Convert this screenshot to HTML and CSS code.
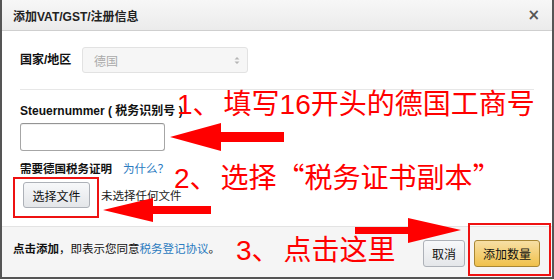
FILE: index.html
```html
<!DOCTYPE html>
<html lang="zh-CN">
<head>
<meta charset="utf-8">
<title>添加VAT/GST/注册信息</title>
<link rel="stylesheet" href="styles.css">
</head>
<body>
<div class="modal">
  <div class="modal-header">
    <span class="modal-title">添加VAT/GST/注册信息</span>
    <span class="close">×</span>
  </div>
  <div class="modal-body">
    <div class="row-country">
      <span class="label">国家/地区</span>
      <div class="select">
        <span>德国</span>
        <svg class="updown" width="6" height="9" viewBox="0 0 6 9"><path d="M0.5 3.5 L3 1 L5.5 3.5 Z M0.5 5.5 L3 8 L5.5 5.5 Z" fill="#b5b5b5"/></svg>
      </div>
    </div>
    <div class="divider"></div>
    <div class="label label-tax">Steuernummer ( 税务识别号 )</div>
    <div class="text-input"></div>
    <div class="label-line"><span class="label label-proof">需要德国税务证明</span><a class="why">为什么？</a></div>
    <div class="file-row">
      <span class="btn btn-file">选择文件</span>
      <span class="nofile">未选择任何文件</span>
    </div>
  </div>
  <div class="modal-footer">
    <span class="footer-text"><b>点击添加</b>，即表示您同意<a class="link">税务登记协议</a>。</span>
    <div class="actions">
      <span class="btn btn-cancel">取消</span>
      <span class="btn btn-primary">添加数量</span>
    </div>
  </div>
</div>

<svg class="overlay" width="554" height="280" viewBox="0 0 554 280">
  <rect x="14" y="178" width="84" height="39" fill="none" stroke="#ee1111" stroke-width="2"/>
  <rect x="469" y="224" width="81" height="51" fill="none" stroke="#ee1111" stroke-width="2"/>
  <polygon points="170,137 221,123 221,132 284,132 284,142 221,142 221,151" fill="#ff0000"/>
  <polygon points="103,210 153,198 153,206 211,206 211,214 153,214 153,222" fill="#ff0000"/>
  <polygon points="355,227 408,227 408,218 461,230 408,243 408,234 355,234" fill="#ff0000"/>
</svg>
<div class="note note1">1、<span class="gap">填写16开头的德国工商号</span></div>
<div class="note note2">2、<span class="gap">选择<span class="cjk">“</span>税务证书副本<span class="cjk">”</span></span></div>
<div class="note note3">3、<span class="gap3">点击这里</span></div>
</body>
</html>
```
FILE: styles.css
```css
html, body {
  margin: 0;
  padding: 0;
}
body {
  width: 554px;
  height: 280px;
  overflow: hidden;
  position: relative;
  background: #ffffff;
  font-family: "Liberation Sans", "Noto Sans CJK SC", sans-serif;
  color: #222;
}
.modal {
  box-sizing: border-box;
  width: 554px;
  height: 279px;
  border-left: 2px solid #555;
  border-right: 2px solid #555;
  border-bottom: 2px solid #555;
  display: flex;
  flex-direction: column;
  background: #fff;
}
.modal-header {
  box-sizing: border-box;
  height: 31px;
  flex: none;
  border-bottom: 1px solid #cfcfcf;
  background: linear-gradient(#f7f7f7, #ebebeb);
  display: flex;
  align-items: center;
  justify-content: space-between;
  padding: 0 12px 0 11px;
}
.modal-title {
  font-size: 12px;
  font-weight: bold;
  color: #222;
}
.close {
  font-size: 15px;
  font-weight: bold;
  color: #555;
  line-height: 1;
  font-family: "DejaVu Sans", sans-serif;
}
.modal-body {
  flex: 1;
  padding: 16px 18px 0 18px;
  display: flex;
  flex-direction: column;
  align-items: flex-start;
}
.label {
  font-size: 12px;
  font-weight: bold;
  color: #111;
  line-height: 16px;
}
.row-country {
  display: flex;
  align-items: center;
}
.row-country .label {
  width: 62px;
}
.select {
  box-sizing: border-box;
  width: 166px;
  height: 26px;
  border: 1px solid #e2e2e2;
  border-radius: 3px;
  background: #f6f6f6;
  display: flex;
  align-items: center;
  justify-content: space-between;
  padding: 0 7px 0 11px;
  font-size: 12px;
  color: #aaa;
}
.divider {
  width: 514px;
  height: 1px;
  background: #e7e7e7;
  margin-top: 16px;
}
.label-tax {
  margin-top: 13px;
}
.text-input {
  box-sizing: border-box;
  width: 145px;
  height: 28px;
  margin-top: 4px;
  border: 1px solid #a6a6a6;
  border-top-color: #949494;
  border-radius: 3px;
  background: #fff;
  box-shadow: inset 0 1px 0 rgba(0,0,0,0.06);
}
.label-line {
  margin-top: 10px;
  display: flex;
  align-items: center;
}
.label-proof {
  font-size: 11.5px;
}
.why {
  margin-left: 11px;
  font-size: 11.5px;
  color: #2b7bbf;
  line-height: 16px;
}
.file-row {
  margin-top: 5px;
  display: flex;
  align-items: center;
  padding-left: 3px;
}
.btn {
  box-sizing: border-box;
  display: inline-flex;
  align-items: center;
  justify-content: center;
  font-size: 12px;
  color: #111;
  border-radius: 3px;
}
.btn-file {
  width: 67px;
  height: 26px;
  border: 1px solid #adb1b8;
  background: linear-gradient(#f7f8fa, #e4e6e9);
}
.nofile {
  margin-left: 11px;
  font-size: 11.5px;
  color: #222;
}
.modal-footer {
  box-sizing: border-box;
  height: 51px;
  flex: none;
  border-top: 1px solid #e3e3e3;
  background: #f5f5f5;
  display: flex;
  align-items: center;
  justify-content: space-between;
  padding: 0 12px 0 11px;
}
.footer-text {
  font-size: 11.5px;
  color: #111;
  margin-top: -8px;
}
.footer-text b {
  font-weight: bold;
}
.link {
  color: #2b7bbf;
}
.actions {
  display: flex;
  gap: 9px;
  margin-top: 2px;
}
.btn-cancel {
  width: 42px;
  height: 27px;
  border: 1px solid #adb1b8;
  background: linear-gradient(#f7f8fa, #e4e6e9);
}
.btn-primary {
  width: 66px;
  height: 27px;
  border: 1px solid #a88734;
  background: linear-gradient(#f7dfa5, #f0c14b);
}
.overlay {
  position: absolute;
  left: 0;
  top: 0;
  pointer-events: none;
}
.note {
  position: absolute;
  color: #ff0000;
  font-size: 28px;
  line-height: 28px;
  white-space: nowrap;
  font-family: "Liberation Sans", "Noto Sans CJK SC", sans-serif;
}
.note .gap {
  margin-left: 3px;
}
.note .gap3 {
  margin-left: 4px;
}
.note .cjk {
  font-family: "Noto Sans CJK SC", sans-serif;
}
.note1 {
  left: 177px;
  top: 91px;
}
.note2 {
  left: 174px;
  top: 162px;
}
.note3 {
  left: 236px;
  top: 237px;
}
```
